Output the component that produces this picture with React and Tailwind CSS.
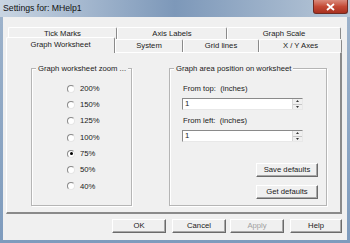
import React from "react";

const Tab = ({ label, w, selected }) => (
  <div
    className={`flex items-center justify-center shrink-0 border-t border-l border-t-white border-l-white border-r border-r-[#8a8a8a] rounded-t-[2px] ${
      selected ? "relative -top-[2px] h-[16px] z-10 bg-[#f0f0f0] pb-[2px]" : "h-full"
    }`}
    style={{ width: w }}
  >
    {label}
  </div>
);

const Btn = ({ children, w, disabled }) => (
  <div
    className={`flex items-center justify-center h-[14px] shrink-0 border border-t-white border-l-white border-r-[#6b6b6b] border-b-[#6b6b6b] shadow-[inset_-1px_-1px_0_#a8a8a8] bg-[#f0f0f0] ${
      disabled ? "text-[#a0a0a0]" : "text-[#1a1a1a]"
    }`}
    style={{ width: w }}
  >
    {children}
  </div>
);

const Radio = ({ label, checked }) => (
  <div className="flex items-center h-[16.3px] pl-[35px]">
    <span className="w-[8px] h-[8px] rounded-full bg-white border border-t-[#8a8a8a] border-l-[#8a8a8a] border-r-[#e6e6e6] border-b-[#e6e6e6] flex items-center justify-center">
      {checked && <span className="w-[3px] h-[3px] rounded-full bg-black" />}
    </span>
    <span className="ml-[5px]">{label}</span>
  </div>
);

const Spin = () => (
  <div className="flex flex-col w-[10px] h-full border-l border-[#d8d8d8]">
    <div className="flex-1 flex items-center justify-center bg-[#f0f0f0] border-b border-[#c8c8c8]">
      <svg width="3" height="2" viewBox="0 0 3 2">
        <path d="M1.5 0 L3 2 L0 2 Z" fill="#333" />
      </svg>
    </div>
    <div className="flex-1 flex items-center justify-center bg-[#f0f0f0]">
      <svg width="3" height="2" viewBox="0 0 3 2">
        <path d="M0 0 L3 0 L1.5 2 Z" fill="#333" />
      </svg>
    </div>
  </div>
);

const NumField = () => (
  <div className="flex h-[12px] w-[121px] bg-white border border-t-[#8a8a8a] border-l-[#8a8a8a] border-r-[#e8e8e8] border-b-[#e8e8e8]">
    <div className="flex-1 flex items-center pl-[2px]">1</div>
    <Spin />
  </div>
);

const GroupBox = ({ title, w, children }) => (
  <div
    className="relative h-[138px] shrink-0 border border-[#b5b5b5] shadow-[inset_1px_1px_0_#fff,1px_1px_0_#fff]"
    style={{ width: w }}
  >
    <span className="absolute -top-[5px] left-[4px] px-[2px] bg-[#f0f0f0] leading-[9px]">{title}</span>
    {children}
  </div>
);

export default function App() {
  return (
    <div className="w-[350px] h-[243px] overflow-hidden flex flex-col bg-gradient-to-b from-[#9fb4cc] to-[#7e9bbd] font-['Liberation_Sans',Arial,sans-serif] text-[7.7px] text-[#1a1a1a] leading-none">
      {/* title bar */}
      <div className="h-[17px] flex justify-between bg-gradient-to-r from-[#c9d5e2] via-[#7d98b9] to-[#b9c8d8] shrink-0">
        <div className="pl-[3px] pt-[4px] text-[8.7px] text-[#111]">Settings for: MHelp1</div>
        <div className="w-[35px] h-[14px] mr-[2px] rounded-b-[3px] bg-gradient-to-b from-[#d98a7c] via-[#c44a36] to-[#a8301f] border border-[#6e2a22] border-t-0 flex items-center justify-center">
          <svg width="9" height="8" viewBox="0 0 9 8">
            <path d="M1 1 L8 7 M8 1 L1 7" stroke="#fff" strokeWidth="1.8" />
          </svg>
        </div>
      </div>

      {/* client */}
      <div className="flex-1 mx-[3px] mb-[3px] bg-[#f0f0f0] flex flex-col">
        <div className="pl-[3px] pt-[10px]">
          <div className="flex h-[12px] pl-[2px]">
            <Tab label="Tick Marks" w={109} />
            <Tab label="Axis Labels" w={110} />
            <Tab label="Graph Scale" w={114} />
          </div>
          <div className="flex h-[13px]">
            <Tab label="Graph Worksheet" w={109} selected />
            <Tab label="System" w={68} />
            <Tab label="Grid lines" w={76} />
            <Tab label="X / Y Axes" w={83} />
          </div>
        </div>

        {/* tab panel */}
        <div className="ml-[3px] w-[336px] h-[162px] border-t border-l border-white border-r-2 border-b-2 border-r-[#8a8a8a] border-b-[#8a8a8a] flex gap-[37px] pl-[24px] pt-[15px]">
          <GroupBox title="Graph worksheet zoom ..." w={101}>
            <div className="pt-[11.5px]">
              <Radio label="200%" />
              <Radio label="150%" />
              <Radio label="125%" />
              <Radio label="100%" />
              <Radio label="75%" checked />
              <Radio label="50%" />
              <Radio label="40%" />
            </div>
          </GroupBox>

          <GroupBox title="Graph area position on worksheet" w={158}>
            <div className="flex flex-col pl-[12px] pt-[15px]">
              <div className="pl-[1px] h-[9px] flex items-center">From top:&nbsp; (inches)</div>
              <div className="mt-[5px]">
                <NumField />
              </div>
              <div className="pl-[1px] mt-[6px] h-[9px] flex items-center">From left:&nbsp; (inches)</div>
              <div className="mt-[5px]">
                <NumField />
              </div>
              <div className="flex flex-col items-end pr-[8px] mt-[21px] gap-[8px]">
                <Btn w={62}>Save defaults</Btn>
                <Btn w={62}>Get defaults</Btn>
              </div>
            </div>
          </GroupBox>
        </div>

        {/* dialog buttons */}
        <div className="flex mt-[5px] pl-[109px]">
          <Btn w={54}>OK</Btn>
          <div className="ml-[6px]">
            <Btn w={54}>Cancel</Btn>
          </div>
          <div className="ml-[4px]">
            <Btn w={54} disabled>Apply</Btn>
          </div>
          <div className="ml-[6px]">
            <Btn w={52}>Help</Btn>
          </div>
        </div>
      </div>
    </div>
  );
}
